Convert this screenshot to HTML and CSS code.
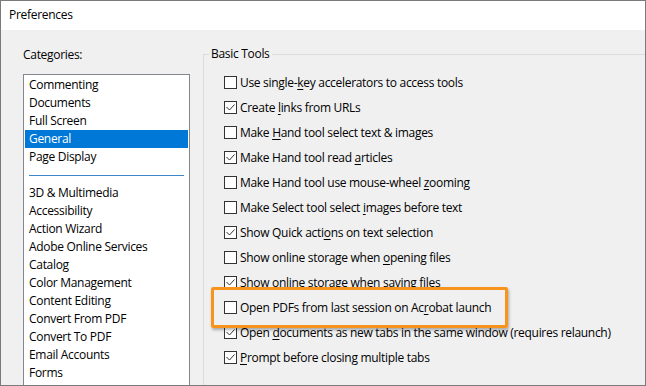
FILE: index.html
```html
<!DOCTYPE html>
<html lang="en">
<head>
  <meta charset="UTF-8" />
  <title>Preferences</title>
  <link rel="stylesheet" href="styles.css">
</head>
<body>
  <div class="window">
    <div class="titlebar">Preferences</div>

    <div class="dialog">
      <!-- Left: categories list -->
      <div class="categories">
        <div class="label">Categories:</div>
        <ul class="list">
          <li>Commenting</li>
          <li>Documents</li>
          <li>Full Screen</li>
          <li class="selected">General</li>
          <li>Page Display</li>
          <li class="sep"></li>
          <li>3D &amp; Multimedia</li>
          <li>Accessibility</li>
          <li>Action Wizard</li>
          <li>Adobe Online Services</li>
          <li>Catalog</li>
          <li>Color Management</li>
          <li>Content Editing</li>
          <li>Convert From PDF</li>
          <li>Convert To PDF</li>
          <li>Email Accounts</li>
          <li>Forms</li>
        </ul>
      </div>

      <!-- Right: basic tools group -->
      <fieldset class="group">
        <legend>Basic Tools</legend>
        <div class="options">
          <label class="option"><span class="box"></span><span>Use single-<u>k</u>ey accelerators to access tools</span></label>
          <label class="option"><span class="box"><svg viewBox="0 0 11 11"><polyline points="1.5,5 4.5,8 9.5,2.5"/></svg></span><span>Create <u>l</u>inks from URLs</span></label>
          <label class="option"><span class="box"></span><span>Make <u>H</u>and tool select text &amp; images</span></label>
          <label class="option"><span class="box"><svg viewBox="0 0 11 11"><polyline points="1.5,5 4.5,8 9.5,2.5"/></svg></span><span>Make Hand tool read <u>a</u>rticles</span></label>
          <label class="option"><span class="box"></span><span>Make Hand tool use mouse-wheel <u>z</u>ooming</span></label>
          <label class="option"><span class="box"></span><span>Make Select tool select <u>i</u>mages before text</span></label>
          <label class="option"><span class="box"><svg viewBox="0 0 11 11"><polyline points="1.5,5 4.5,8 9.5,2.5"/></svg></span><span>Show Quick acti<u>o</u>ns on text selection</span></label>
          <label class="option"><span class="box"></span><span>Show online storage when <u>o</u>pening files</span></label>
          <label class="option"><span class="box"><svg viewBox="0 0 11 11"><polyline points="1.5,5 4.5,8 9.5,2.5"/></svg></span><span>Show online storage when <u>s</u>aving files</span></label>
          <label class="option"><span class="highlight"><span class="box"></span><span>Open PDFs from last session on Ac<u>r</u>obat launch</span></span></label>
          <label class="option"><span class="box"><svg viewBox="0 0 11 11"><polyline points="1.5,5 4.5,8 9.5,2.5"/></svg></span><span>Open <u>d</u>ocuments as new tabs in the same window (requires relaunch)</span></label>
          <label class="option"><span class="box"><svg viewBox="0 0 11 11"><polyline points="1.5,5 4.5,8 9.5,2.5"/></svg></span><span><u>P</u>rompt before closing multiple tabs</span></label>
        </div>
      </fieldset>
    </div>
  </div>
</body>
</html>
```

FILE: styles.css
```css
* {
  margin: 0;
  padding: 0;
  box-sizing: border-box;
}

body {
  font-family: 'Open Sans', sans-serif;
  font-size: 12px;
  letter-spacing: -0.3px;
  color: #000;
  background-color: #fff;
}

.window {
  width: 646px;
  height: 386px;
  border: 1px solid #7a7a7a;
  background-color: #f0f0f0;
  overflow: hidden;
  display: flex;
  flex-direction: column;
}

.titlebar {
  height: 29px;
  line-height: 28px;
  padding-left: 8px;
  background-color: #fff;
  flex-shrink: 0;
}

.dialog {
  display: flex;
  flex: 1;
  min-height: 0;
}

/* Categories */

.categories {
  width: 167px;
  margin-left: 22px;
  margin-top: 17px;
  flex-shrink: 0;
}

.categories .label {
  line-height: 16px;
  margin-bottom: 11px;
}

.list {
  list-style: none;
  min-height: 330px;
  background-color: #fff;
  border: 1px solid #828790;
  padding: 1px;
}

.list li {
  height: 18px;
  line-height: 18px;
  padding-left: 4px;
  white-space: nowrap;
}

.list li.selected {
  background-color: #0078d7;
  color: #fff;
}

.list li.sep {
  height: 1px;
  margin: 9px 4px 8px;
  padding: 0;
  background-color: #3d87c8;
}

/* Basic tools group */

.group {
  flex: 1;
  margin-left: 13px;
  margin-top: 16px;
  margin-right: -2px;
  border: 1px solid #dcdcdc;
  border-right: none;
  border-bottom: none;
  padding: 0;
  min-width: 0;
}

.group legend {
  margin-left: 5px;
  padding: 0 2px;
  line-height: 16px;
}

.options {
  padding-top: 8px;
  padding-left: 20px;
}

.option {
  display: flex;
  align-items: center;
  height: 25px;
  white-space: nowrap;
}

.option u {
  text-decoration: underline;
  text-underline-offset: 2px;
}

.box {
  width: 13px;
  height: 13px;
  border: 1px solid #333;
  background-color: #fff;
  margin-right: 3px;
  flex-shrink: 0;
  display: flex;
}

.box svg {
  width: 11px;
  height: 11px;
  fill: none;
  stroke: #333;
  stroke-width: 1;
}

.highlight {
  position: relative;
  display: flex;
  align-items: center;
}

.highlight::before {
  content: "";
  position: absolute;
  top: -12px;
  bottom: -12px;
  left: -13px;
  right: -17px;
  border: 3px solid #f7941d;
  border-radius: 2px;
  box-shadow: 1px 2px 3px rgba(0, 0, 0, 0.3);
}
```
